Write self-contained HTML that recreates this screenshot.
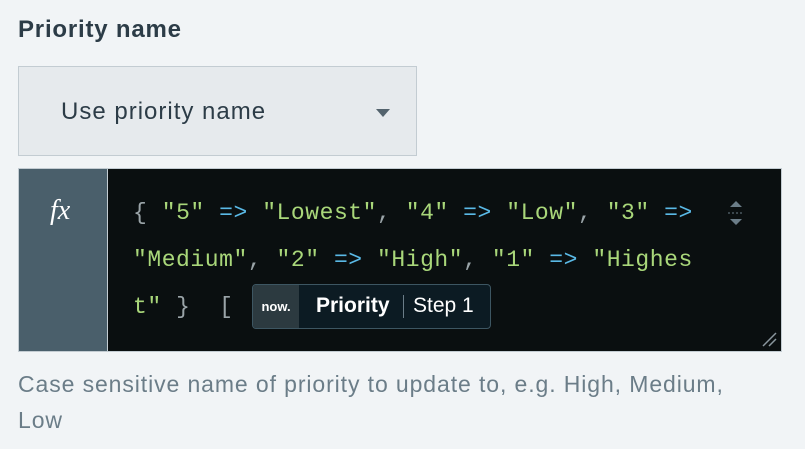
<!DOCTYPE html>
<html><head><style>
body{margin:0;width:805px;height:449px;background:#f1f4f6;font-family:"Liberation Sans",sans-serif;position:relative;overflow:hidden}
.t{position:absolute;left:18px;top:16px;font-size:24px;letter-spacing:0.8px;font-weight:bold;color:#2c3c47}
.dd{position:absolute;left:18px;top:66px;width:397px;height:88px;background:#e6eaed;border:1px solid #c3ccd2}
.dd span{position:absolute;left:42px;top:31px;font-size:24px;letter-spacing:1px;color:#2c3c47}
.car{position:absolute;left:357px;top:42px;width:0;height:0;border-left:7px solid transparent;border-right:7px solid transparent;border-top:8px solid #53636d}
.ed{position:absolute;left:18px;top:168px;width:762px;height:182px;border:1px solid #c3ccd2;background:#0a0f10}
.fx{position:absolute;left:0;top:0;width:88px;height:182px;background:#4a5f6b;border-right:1px solid #c3ccd2}
.fx span{position:absolute;left:31px;top:26px;color:#fff;font-family:"Liberation Serif",serif;font-style:italic;font-size:28px}
.code{position:absolute;left:114px;top:21px;font-family:"Liberation Mono",monospace;font-size:23px;letter-spacing:0.55px;line-height:47px;color:#a9d77a;white-space:pre}
.p{color:#9aa4a8}.o{color:#5ab9e6}
.pill{position:absolute;left:233px;top:115px;width:237px;height:43px;border:1px solid #3d5662;border-radius:4px;background:#0c1b23;overflow:hidden;font-family:"Liberation Sans",sans-serif;letter-spacing:0}
.logo{position:absolute;left:0;top:0;width:46px;height:43px;background:#2c3a40;color:#fff;font-size:13px;font-weight:bold;line-height:43px;text-align:center}
.pr{position:absolute;left:63px;top:10px;color:#fff;font-weight:bold;font-size:21px;line-height:22px}
.sep{position:absolute;left:150px;top:10px;width:1px;height:23px;background:#6b7d88}
.st{position:absolute;left:160px;top:10px;color:#fff;font-size:21px;line-height:22px}
.h{position:absolute;left:18px;top:366px;font-size:23px;letter-spacing:0.9px;line-height:36px;color:#6b7d88;width:785px}
</style></head><body>
<div class="t">Priority name</div>
<div class="dd"><span>Use priority name</span><div class="car"></div></div>
<div class="ed">
<div class="fx"><span>fx</span></div>
<div class="code"><span class="p">{</span> "5" <span class="o">=&gt;</span> "Lowest"<span class="p">,</span> "4" <span class="o">=&gt;</span> "Low"<span class="p">,</span> "3" <span class="o">=&gt;</span>
"Medium"<span class="p">,</span> "2" <span class="o">=&gt;</span> "High"<span class="p">,</span> "1" <span class="o">=&gt;</span> "Highes
t" <span class="p">}  [</span>                 <span class="p">]</span></div>
<div class="pill"><div class="logo">now.</div><div class="pr">Priority</div><div class="sep"></div><div class="st">Step 1</div></div>
<svg style="position:absolute;left:707px;top:32px" width="20" height="24"><path d="M10 0L16 6H4Z M10 24L16 18H4Z" fill="#6b7d88"/><path d="M2 12H18" stroke="#6b7d88" stroke-dasharray="2 2"/></svg>
<svg style="position:absolute;left:742px;top:162px" width="16" height="16"><path d="M2 15L15 2M8 15L15 8" stroke="#8a979e" stroke-width="1.5"/></svg>
</div>
<div class="h">Case sensitive name of priority to update to, e.g. High, Medium,<br>Low</div>
</body></html>
